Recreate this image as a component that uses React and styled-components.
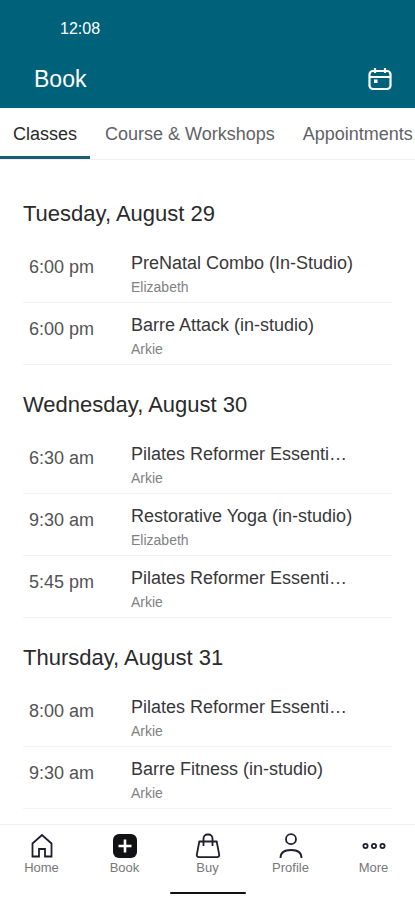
import styled, { createGlobalStyle } from 'styled-components';

const GlobalStyle = createGlobalStyle`
  * {
    box-sizing: border-box;
  }
  body {
    margin: 0;
    background: #fff;
    font-family: "Liberation Sans", Arial, sans-serif;
    color: #38383a;
  }
  h1, h2, h3, p, ul {
    margin: 0;
    padding: 0;
    font-weight: 400;
  }
  ul {
    list-style: none;
  }
`;

const Screen = styled.div`
  display: flex;
  flex-direction: column;
  height: 100vh;
  overflow: hidden;
`;

const Header = styled.header`
  flex: none;
  background: #00627a;
  color: #fff;
`;

const StatusBar = styled.div`
  padding: 19px 60px 11px;
  font-size: 16px;
  line-height: 20px;
`;

const TitleBar = styled.div`
  display: flex;
  align-items: center;
  justify-content: space-between;
  height: 58px;
  padding: 0 22px 0 34px;

  h1 {
    font-size: 23px;
    line-height: 28px;
  }
`;

const IconButton = styled.button`
  display: flex;
  padding: 0;
  border: none;
  background: none;
  color: inherit;
  cursor: pointer;
`;

const Tabs = styled.nav`
  display: flex;
  flex: none;
  gap: 2px;
  overflow: hidden;
  height: 52px;
  border-bottom: 1px solid #f0f0f2;
`;

const Tab = styled.button`
  flex: none;
  padding: 3px 13px 0;
  border: none;
  border-bottom: 3px solid ${(p) => (p.$active ? '#1c5c74' : 'transparent')};
  background: none;
  color: ${(p) => (p.$active ? '#2a2a2c' : '#626266')};
  font-family: inherit;
  font-size: 18px;
  line-height: 24px;
  cursor: pointer;
`;

const Schedule = styled.main`
  flex: 1;
  min-height: 0;
  overflow: hidden;
  padding: 14px 23px 0;
`;

const DayTitle = styled.h2`
  padding: 26px 0 13px;
  font-size: 22px;
  line-height: 28px;
  color: #2a2a2c;
`;

const ClassRow = styled.li`
  display: grid;
  grid-template-columns: 102px 1fr;
  height: 62px;
  padding: 10px 36px 0 6px;
  border-bottom: 1px solid #f3f3f5;
`;

const Time = styled.time`
  padding-top: 4px;
  font-size: 18px;
  line-height: 24px;
  color: #535356;
`;

const ClassInfo = styled.div`
  display: flex;
  flex-direction: column;
  gap: 2px;
  min-width: 0;

  h3 {
    overflow: hidden;
    font-size: 18px;
    line-height: 24px;
    text-overflow: ellipsis;
    white-space: nowrap;
  }
  p {
    font-size: 14px;
    line-height: 20px;
    color: #818184;
  }
`;

const BottomBar = styled.footer`
  display: flex;
  flex: none;
  flex-direction: column;
  align-items: center;
  height: 76px;
  border-top: 1px solid #f0f0f2;
  background: #fff;
`;

const NavItems = styled.nav`
  display: grid;
  grid-template-columns: repeat(5, 1fr);
  align-self: stretch;
  padding-top: 7px;
`;

const NavItem = styled.a`
  display: flex;
  flex-direction: column;
  align-items: center;
  color: #77777a;
  font-size: 13px;
  line-height: 16px;
  text-decoration: none;

  svg {
    color: #1e1e2e;
  }
`;

const HomeIndicator = styled.div`
  width: 76px;
  height: 2px;
  margin-top: 16px;
  border-radius: 1px;
  background: #111;
`;

const days = [
  {
    title: 'Tuesday, August 29',
    classes: [
      { time: '6:00 pm', name: 'PreNatal Combo (In-Studio)', teacher: 'Elizabeth' },
      { time: '6:00 pm', name: 'Barre Attack (in-studio)', teacher: 'Arkie' },
    ],
  },
  {
    title: 'Wednesday, August 30',
    classes: [
      { time: '6:30 am', name: 'Pilates Reformer Essenti…', teacher: 'Arkie' },
      { time: '9:30 am', name: 'Restorative Yoga (in-studio)', teacher: 'Elizabeth' },
      { time: '5:45 pm', name: 'Pilates Reformer Essenti…', teacher: 'Arkie' },
    ],
  },
  {
    title: 'Thursday, August 31',
    classes: [
      { time: '8:00 am', name: 'Pilates Reformer Essenti…', teacher: 'Arkie' },
      { time: '9:30 am', name: 'Barre Fitness (in-studio)', teacher: 'Arkie' },
    ],
  },
];

const icons = {
  Home: <path d="M4.5 11.5 14 3l9.500 8.500V24.500h-6.500v-7.500h-6v7.500H4.500z" />,
  Book: (
    <>
      <rect x="2" y="2" width="24" height="24" rx="6" fill="#121214" stroke="none" />
      <path d="M14 7.500v13M7.500 14h13" stroke="#fff" strokeWidth="2.600" />
    </>
  ),
  Buy: (
    <>
      <path d="M5.300 9.500h17.400l2.500 13.200a2 2 0 0 1-2 2.400H4.800a2 2 0 0 1-2-2.400z" strokeLinejoin="round" />
      <path d="M9.500 14V6.500a4 4 0 0 1 4-4h1a4 4 0 0 1 4 4V14" />
    </>
  ),
  Profile: (
    <>
      <circle cx="14" cy="7.200" r="5" />
      <path d="M3.500 26c0-5.500 4-8 10.500-8s10.500 2.500 10.500 8" />
    </>
  ),
  More: (
    <>
      <circle cx="5.500" cy="14" r="2.100" />
      <circle cx="14" cy="14" r="2.100" />
      <circle cx="22.500" cy="14" r="2.100" />
    </>
  ),
};

function CalendarIcon() {
  return (
    <svg width="26" height="24" viewBox="0 0 26 24" fill="none" stroke="currentColor" strokeWidth="2.200">
      <rect x="2.500" y="4" width="21" height="18" rx="3.500" />
      <path d="M2.500 10h21M8 1v5M18 1v5" />
      <rect x="7" y="12.500" width="3.500" height="3.500" fill="currentColor" stroke="none" />
    </svg>
  );
}

export default function App() {
  return (
    <>
      <GlobalStyle />
      <Screen>
        <Header>
          <StatusBar>12:08</StatusBar>
          <TitleBar>
            <h1>Book</h1>
            <IconButton aria-label="Pick a date">
              <CalendarIcon />
            </IconButton>
          </TitleBar>
        </Header>

        <Tabs>
          <Tab $active>Classes</Tab>
          <Tab>Course &amp; Workshops</Tab>
          <Tab>Appointments</Tab>
        </Tabs>

        <Schedule>
          {days.map((day) => (
            <section key={day.title}>
              <DayTitle>{day.title}</DayTitle>
              <ul>
                {day.classes.map((item) => (
                  <ClassRow key={item.time + item.name}>
                    <Time>{item.time}</Time>
                    <ClassInfo>
                      <h3>{item.name}</h3>
                      <p>{item.teacher}</p>
                    </ClassInfo>
                  </ClassRow>
                ))}
              </ul>
            </section>
          ))}
        </Schedule>

        <BottomBar>
          <NavItems>
            {Object.keys(icons).map((name) => (
              <NavItem key={name} href={'#' + name.toLowerCase()}>
                <svg width="28" height="28" viewBox="0 0 28 28" fill="none" stroke="currentColor" strokeWidth="1.800">
                  {icons[name]}
                </svg>
                {name}
              </NavItem>
            ))}
          </NavItems>
          <HomeIndicator />
        </BottomBar>
      </Screen>
    </>
  );
}
